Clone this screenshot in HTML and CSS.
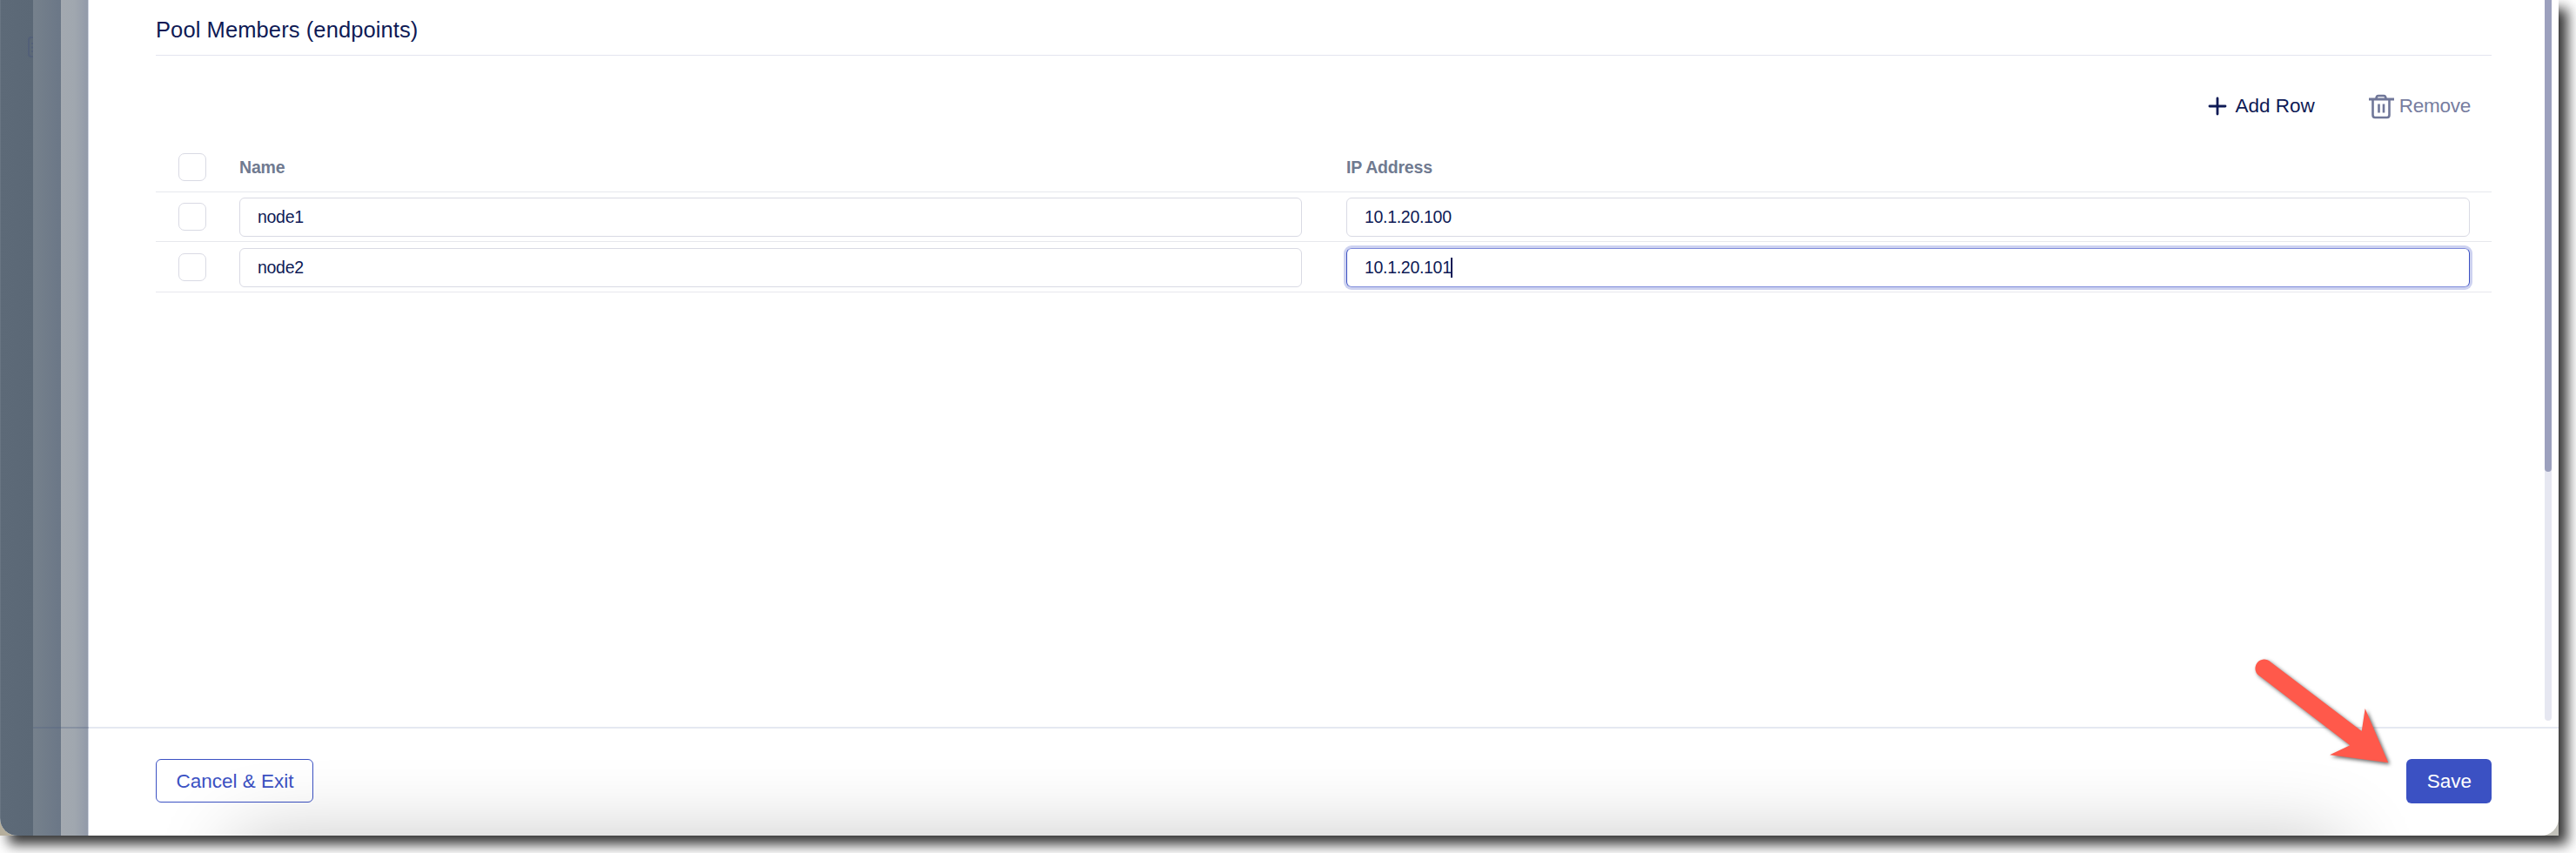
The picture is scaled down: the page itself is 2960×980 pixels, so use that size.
FILE: index.html
```html
<!DOCTYPE html>
<html lang="en">
<head>
<meta charset="utf-8">
<title>Pool Members</title>
<link rel="stylesheet" href="styles.css">
</head>
<body>
<div class="frame">
  <div class="window">
    <div class="rail rail-back">
      <svg class="rail-icon" width="6" height="24" viewBox="0 0 6 24" fill="none" stroke="#536078" stroke-width="2"><path d="M6 1H4Q1 1 1 4V20Q1 23 4 23H6M4 8H6M4 12.500H6M4 17H6"/></svg>
    </div>
    <div class="rail rail-mid"></div>
    <div class="rail rail-front"></div>
    <main class="panel">
      <div class="content">
        <section class="section">
          <h2 class="section-title"><span>Pool Members (endpoints)</span></h2>
          <div class="toolbar">
            <button class="tool tool-add">
              <svg width="22" height="22" viewBox="0 0 22 22" fill="none" stroke="#0e1a55" stroke-width="2.800" stroke-linecap="round"><path d="M11 2V20M2 11H20"/></svg>
              <span>Add Row</span>
            </button>
            <button class="tool tool-remove">
              <svg width="30" height="30" viewBox="0 0 30 30" fill="none" stroke="#707799" stroke-width="2.600"><path d="M1 7H30" stroke-width="3"/><path d="M9.500 6.500Q9.500 3 12 3H18Q20.500 3 20.500 6.500"/><path d="M5.500 7V25Q5.500 28 8 28H22Q24.500 28 24.500 25V7"/><path d="M12.500 12.500V22.500M18 12.500V22.500"/></svg>
              <span>Remove</span>
            </button>
          </div>
          <div class="table">
            <div class="row row-head">
              <span class="check"></span>
              <span class="head head-name">Name</span>
              <span class="head head-ip">IP Address</span>
            </div>
            <div class="row">
              <span class="check"></span>
              <div class="field"><span>node1</span></div>
              <div class="field"><span>10.1.20.100</span></div>
            </div>
            <div class="row row-last">
              <span class="check"></span>
              <div class="field"><span>node2</span></div>
              <div class="field field-focus"><span>10.1.20.101</span><i class="caret"></i></div>
            </div>
          </div>
        </section>
        <div class="scroll"><div class="thumb"></div></div>
      </div>
      <footer class="footer">
        <button class="btn btn-cancel">Cancel &amp; Exit</button>
        <button class="btn btn-save">Save</button>
      </footer>
    </main>
    <div class="rail-line"></div>
    <div class="dock-shade"></div>
  </div>
  <svg class="arrow" width="170" height="140" viewBox="2585 750 170 140" fill="#ff594b"><path d="M2609.300 760.700L2713.700 840L2717.700 814L2744.300 876.200L2677 867.300L2700.300 856.300L2597.300 777.300A10.400 10.400 0 1 1 2609.300 760.700Z"/></svg>
</div>
</body>
</html>
```
FILE: styles.css
```css
* { box-sizing: border-box; }
body {
  margin: 0;
  width: 2960px;
  height: 980px;
  overflow: hidden;
  background: #fff;
  font-family: "Liberation Sans", Arial, sans-serif;
  color: #0e1a55;
}
.frame {
  position: relative;
  width: 2940px;
  height: 960px;
  background: linear-gradient(90deg, #b5ae9c, #c2c1ba);
  box-shadow: 10px 10px 14px rgba(0, 0, 0, .8);
}
.window {
  position: relative;
  display: flex;
  width: 2940px;
  height: 960px;
  overflow: hidden;
  border-radius: 0 0 20px 20px;
  background: #fff;
}
.rail { flex: none; }
.rail-back { width: 38px; padding: 42px 0 0 32px; background: linear-gradient(90deg, #74808d 0, #5d6a78 1px, #5b6876 100%); }
.rail-icon { display: block; }
.rail-mid { width: 32px; background: linear-gradient(90deg, #76818c, #6b7787); }
.rail-front { width: 32px; border-right: 1px solid #cdd2de; background: linear-gradient(90deg, #a3a9b0 0, #a0a7af 50%, #929aa9 100%); }
.rail-line {
  position: absolute;
  left: 38px;
  top: 835px;
  width: 64px;
  height: 2px;
  background: rgba(80, 95, 130, .3);
}
.panel { flex: 1; display: flex; flex-direction: column; }
.content { height: 835px; display: flex; }
.section { width: 2684px; margin-left: 77px; }
.section-title {
  height: 64px;
  margin: 0;
  padding-top: 19px;
  border-bottom: 1px solid #e4e5ef;
  font-size: 25.5px;
  line-height: 30px;
  font-weight: 400;
  letter-spacing: .1px;
}
.toolbar {
  display: flex;
  justify-content: flex-end;
  gap: 61px;
  height: 99px;
  padding: 43px 24px 0 0;
}
.tool {
  display: flex;
  align-items: center;
  height: 30px;
  padding: 0;
  border: 0;
  background: none;
  font: 22.500px/30px "Liberation Sans", Arial, sans-serif;
  color: #0e1a55;
}
.tool-add { gap: 9px; }
.tool-remove { gap: 6px; color: #777d9f; letter-spacing: -.25px; }
.row {
  display: grid;
  grid-template-columns: 70px 1272px 1291px;
  align-items: center;
  height: 57px;
  padding-left: 26px;
  border-bottom: 1px solid #e7e8ed;
}
.row-head { height: 58px; }
.row-last { height: 58px; padding-top: 1px; }
.check {
  width: 32px;
  height: 32px;
  border: 1px solid #d9dae4;
  border-radius: 7px;
}
.head { font-size: 19.5px; line-height: 24px; font-weight: 700; color: #707a90; letter-spacing: -.2px; }
.head-name { padding-top: 1px; }
.field {
  display: flex;
  align-items: center;
  height: 45px;
  padding: 1px 0 0 20px;
  border: 1px solid #d9dae4;
  border-radius: 6px;
  font-size: 19.5px;
  letter-spacing: -.3px;
}
.field:nth-child(2) { width: 1221px; }
.field-focus { border-color: #7f8cdb; border-left-color: #3c51c2; border-right-color: #3c51c2; box-shadow: 0 0 0 3px #cdd2f0; }
.caret { width: 2px; height: 23px; margin-left: -1px; background: #0e1a55; }
.scroll {
  width: 8px;
  height: 828px;
  margin-left: 61px;
  border-radius: 0 0 4px 4px;
  background: #e6e7f1;
}
.thumb { height: 542px; border-radius: 0 0 4px 4px; background: #9ca0bd; }
.footer {
  display: flex;
  justify-content: space-between;
  height: 125px;
  padding: 35px 77px 0;
  border-top: 2px solid #e5e8f1;
}
.btn {
  height: 51px;
  padding: 1px 0 0 1px;
  border-radius: 6px;
  font: 22.500px/30px "Liberation Sans", Arial, sans-serif;
}
.btn-cancel { width: 181px; height: 50px; border: 1px solid #3b51c3; background: none; color: #3b51c3; }
.btn-save { width: 98px; border: 0; background: #3b51c3; color: #fff; }
.dock-shade {
  position: absolute;
  left: 280px;
  top: 974px;
  width: 2400px;
  height: 100px;
  box-shadow: 0 0 90px 10px rgba(0, 0, 0, .24);
  pointer-events: none;
}
.arrow { position: absolute; left: 2585px; top: 750px; filter: drop-shadow(2px 2px 2px rgba(0, 0, 0, .6)); }
```
